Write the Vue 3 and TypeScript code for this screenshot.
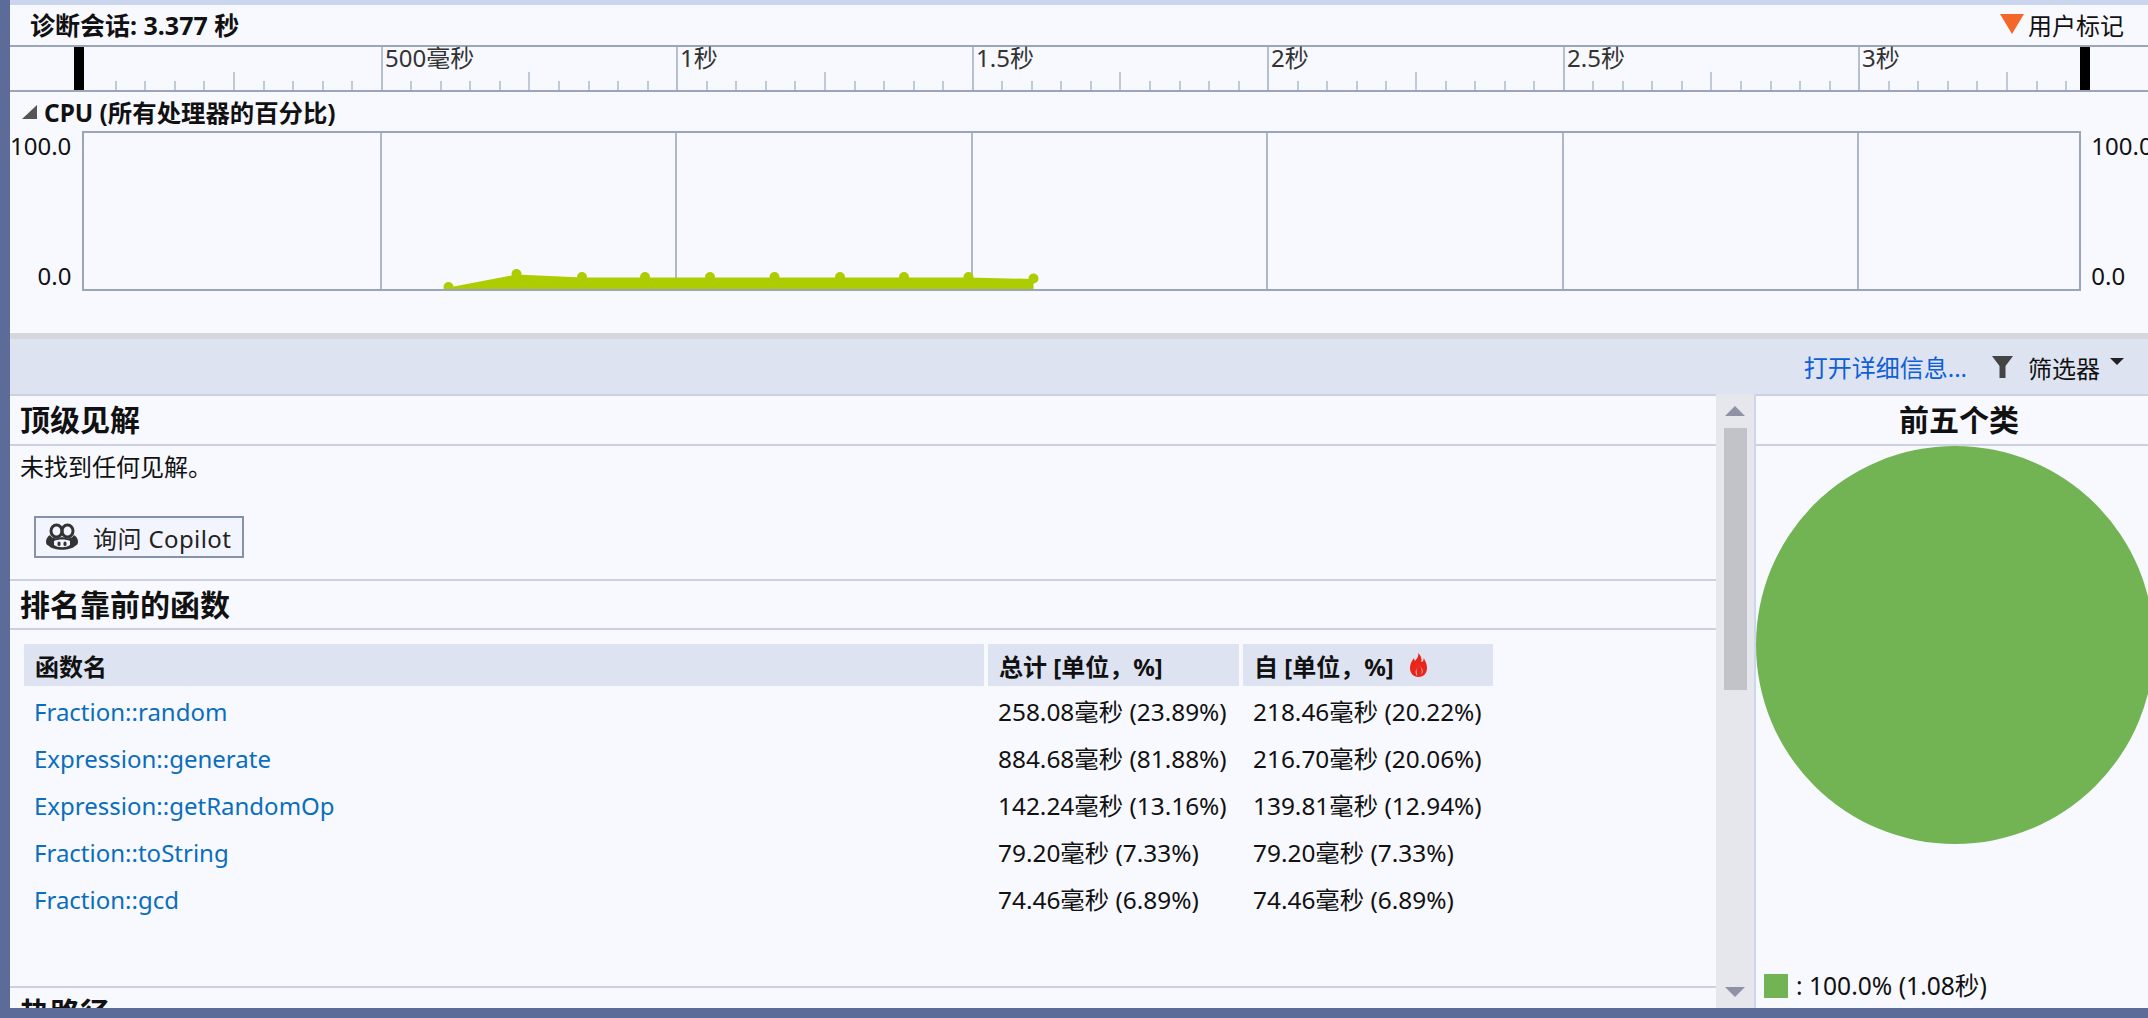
<script setup lang="ts">
interface FuncRow {
  name: string
  total: string
  self: string
}

const rows: FuncRow[] = [
  { name: 'Fraction::random', total: '258.08毫秒 (23.89%)', self: '218.46毫秒 (20.22%)' },
  { name: 'Expression::generate', total: '884.68毫秒 (81.88%)', self: '216.70毫秒 (20.06%)' },
  { name: 'Expression::getRandomOp', total: '142.24毫秒 (13.16%)', self: '139.81毫秒 (12.94%)' },
  { name: 'Fraction::toString', total: '79.20毫秒 (7.33%)', self: '79.20毫秒 (7.33%)' },
  { name: 'Fraction::gcd', total: '74.46毫秒 (6.89%)', self: '74.46毫秒 (6.89%)' },
]

// 时间轴: 每 500 毫秒 295.5px, 每格 1/10
const ORIGIN = 75.2
const STEP = 29.55
const ticks: { x: number; top: number; major: boolean }[] = []
for (let i = 1; i * STEP + ORIGIN < 2068; i++) {
  const major = i % 10 === 0
  const top = major ? 0 : i % 5 === 0 ? 25 : 34
  ticks.push({ x: i * STEP + ORIGIN, top, major })
}

const labels = [
  { text: '500毫秒', i: 10 },
  { text: '1秒', i: 20 },
  { text: '1.5秒', i: 30 },
  { text: '2秒', i: 40 },
  { text: '2.5秒', i: 50 },
  { text: '3秒', i: 60 },
].map((l) => ({ text: l.text, left: Math.round(l.i * STEP + ORIGIN) + 4 }))

// 图表内部坐标 = 页面坐标 - (83, 131)
const gridX = [10, 20, 30, 40, 50, 60].map((i) => i * STEP + ORIGIN - 73)
const dots: [number, number][] = [
  [366.5, 156],
  [434.5, 143],
  [500, 146],
  [563, 146],
  [628, 146],
  [692.5, 146],
  [758, 146],
  [822, 146],
  [886.5, 146],
  [951.5, 147.5],
]
const areaPoints =
  '361,158 ' + dots.map((d) => `${d[0]},${d[1] + 0.5}`).join(' ') + ' 951.5,158'
</script>

<template>
  <div class="window">
    <div class="top-band"></div>

    <header class="session">
      <span class="session-title">诊断会话: 3.377 秒</span>
      <span class="user-mark"><i class="mark-arrow"></i>用户标记</span>
    </header>

    <div class="ruler">
      <svg class="ruler-svg" width="2138" height="43">
        <rect
          v-for="t in ticks"
          :key="t.x"
          :x="Math.round(t.x)"
          :y="t.top"
          width="2"
          :height="43 - t.top"
          :fill="t.major ? '#b4bfd0' : '#c0c9d8'"
        />
        <rect x="64" y="0" width="10" height="43" fill="#000" />
        <rect x="2070" y="0" width="10" height="43" fill="#000" />
      </svg>
      <span v-for="l in labels" :key="l.text" class="ruler-label" :style="{ left: l.left + 'px' }">{{ l.text }}</span>
    </div>

    <section class="cpu">
      <h2 class="cpu-title"><i class="cpu-toggle"></i>CPU (所有处理器的百分比)</h2>
      <div class="cpu-row">
        <div class="axis axis-left">
          <span>100.0</span>
          <span>0.0</span>
        </div>
        <svg class="chart" width="1999" height="160">
          <rect
            v-for="x in gridX"
            :key="x"
            :x="Math.round(x)"
            y="0"
            width="2"
            height="160"
            fill="#adb8c9"
          />
          <polygon :points="areaPoints" fill="#aecd00" />
          <circle v-for="d in dots" :key="d[0]" :cx="d[0]" :cy="d[1]" r="5" fill="#aecd00" />
          <rect x="1" y="1" width="1997" height="158" fill="none" stroke="#9aa6b8" stroke-width="2" />
        </svg>
        <div class="axis axis-right">
          <span>100.0</span>
          <span>0.0</span>
        </div>
      </div>
    </section>

    <div class="split-bar"></div>

    <div class="toolbar">
      <a class="details-link">打开详细信息...</a>
      <svg class="filter-icon" width="21" height="22" viewBox="0 0 21 22">
        <path d="M0 0h21l-7.500 10v12h-6V10z" fill="#444" />
      </svg>
      <span class="filter-label">筛选器</span>
      <i class="filter-caret"></i>
    </div>

    <main class="main">
      <div class="content">
        <h2 class="section-title first">顶级见解</h2>
        <div class="insights">
          <p class="no-insights">未找到任何见解。</p>
          <button class="copilot-btn">
            <svg class="copilot-icon" width="32" height="28" viewBox="0 0 32 28">
              <ellipse cx="10.500" cy="8" rx="5.500" ry="6" fill="none" stroke="#333" stroke-width="3" />
              <ellipse cx="21.500" cy="8" rx="5.500" ry="6" fill="none" stroke="#333" stroke-width="3" />
              <path
                d="M4 12C1 14 0 16 0 19C0 21 1 22 3 23C8 28 24 28 29 23C31 22 32 21 32 19C32 16 31 14 28 12C26 16 22 16 16 14C10 16 6 16 4 12Z"
                fill="#333"
              />
              <path d="M8 18C12 16 20 16 24 18V22C20 25 12 25 8 22Z" fill="#f3f5fe" />
              <rect x="11.500" y="18.500" width="3" height="4.500" rx="1.500" fill="#333" />
              <rect x="17.500" y="18.500" width="3" height="4.500" rx="1.500" fill="#333" />
            </svg>
            <span>询问 Copilot</span>
          </button>
        </div>

        <h2 class="section-title">排名靠前的函数</h2>
        <div class="func-table">
          <div class="th">函数名</div>
          <div class="th">总计 [单位，%]</div>
          <div class="th">
            <span>自 [单位，%]</span>
            <svg class="flame" width="17" height="24" viewBox="0 0 21 24" preserveAspectRatio="none">
              <path
                d="M10 0C11 4 8 6 6 8C5 6 5 5 5 5C2 8 0 11 0 15C0 20 4 24 10.500 24C17 24 21 20 21 15C21 10 18 7 17 5C17 7 16 9 14 9C15 5 13 2 10 0Z"
                fill="#e8261c"
              />
              <path d="M11 11C11 14 7 15 7 19C7 21 8 22 9 23L8 16C9 15 10 14 11 11ZM12 13C14 15 15 17 14.500 20L13 22C15 21 16 19 15.500 17C15 15 13 14 12 13Z" fill="#f6b9ae" />
            </svg>
          </div>
          <template v-for="r in rows" :key="r.name">
            <a class="cell func-link">{{ r.name }}</a>
            <div class="cell num">{{ r.total }}</div>
            <div class="cell num">{{ r.self }}</div>
          </template>
        </div>

        <h2 class="section-title last">热路径</h2>
      </div>

      <div class="scrollbar">
        <i class="arrow-up"></i>
        <div class="thumb"></div>
        <i class="arrow-down"></i>
      </div>

      <aside class="side">
        <h2 class="side-title">前五个类</h2>
        <div class="pie"></div>
        <div class="legend">
          <i class="legend-swatch"></i>
          <span>: 100.0% (1.08秒)</span>
        </div>
      </aside>
    </main>
  </div>
</template>

<style scoped>
.window {
  background: #5d6b99;
  box-sizing: border-box;
  color: #111;
  display: flex;
  flex-direction: column;
  font-family: "Noto Sans", "Noto Sans CJK SC", sans-serif;
  font-size: 24px;
  height: 1018px;
  overflow: hidden;
  padding: 0 0 10px 10px;
  width: 2148px;
}

.top-band {
  background: #cad5ee;
  flex: none;
  height: 5px;
}

.session {
  align-items: center;
  background: #f8f9ff;
  border-bottom: 2px solid #9aa6b8;
  box-sizing: border-box;
  display: flex;
  flex: none;
  height: 42px;
  justify-content: space-between;
  padding: 0 24px 2px 20px;
}

.session-title {
  font-size: 25px;
  font-weight: 700;
}

.user-mark {
  align-items: center;
  display: flex;
  gap: 4px;
}

.mark-arrow {
  border-left: 12px solid transparent;
  border-right: 12px solid transparent;
  border-top: 20px solid #f4672a;
}

.ruler {
  background: #f8f9ff;
  border-bottom: 2px solid #9aa6b8;
  flex: none;
  height: 43px;
  position: relative;
}

.ruler-svg {
  display: block;
}

.ruler-label {
  color: #333;
  line-height: 24px;
  position: absolute;
  top: -1px;
}

.cpu {
  background: #f8f9ff;
  flex: none;
  height: 241px;
}

.cpu-title {
  align-items: center;
  box-sizing: border-box;
  display: flex;
  font-size: 24.4px;
  font-weight: 700;
  height: 39px;
  margin: 0;
  padding: 0 0 0 12px;
}

.cpu-toggle {
  border-bottom: 14px solid #555;
  border-left: 15px solid transparent;
  margin-right: 7px;
}

.cpu-row {
  display: flex;
}

.axis {
  display: flex;
  flex-direction: column;
  height: 160px;
  justify-content: space-between;
  line-height: 30px;
}

.axis-left {
  padding-right: 11px;
  text-align: right;
  width: 62px;
}

.axis-right {
  padding-left: 10px;
}

.chart {
  display: block;
  flex: none;
}

.split-bar {
  background: #d6d7dc;
  flex: none;
  height: 6px;
}

.toolbar {
  align-items: center;
  background: #dee3f1;
  display: flex;
  flex: none;
  height: 55px;
  justify-content: flex-end;
  padding-right: 24px;
}

.details-link {
  color: #0e5fd8;
  margin-right: 25px;
}

.filter-label {
  margin: 2px 10px 0 15px;
}

.filter-caret {
  border-left: 7px solid transparent;
  border-right: 7px solid transparent;
  border-top: 7px solid #222;
  margin-top: -10px;
}

.main {
  background: #f8f9ff;
  display: flex;
  flex: 1;
  min-height: 0;
}

.content {
  border-top: 2px solid #ccd0e0;
  flex: none;
  overflow: hidden;
  width: 1706px;
}

.section-title {
  border-bottom: 2px solid #ccd0e0;
  font-size: 30px;
  font-weight: 700;
  height: 47px;
  line-height: 47px;
  margin: 0;
  padding-left: 10px;
}

.section-title.first {
  height: 48px;
}

.insights {
  border-bottom: 2px solid #ccd0e0;
  height: 133px;
}

.no-insights {
  line-height: 32px;
  margin: 0;
  padding: 5px 0 0 10px;
}

.copilot-btn {
  align-items: center;
  background: #f3f5fe;
  border: 2px solid #8592aa;
  box-sizing: border-box;
  color: #222;
  display: flex;
  font: inherit;
  gap: 15px;
  height: 42px;
  letter-spacing: 0.4px;
  margin: 33px 0 0 24px;
  padding: 0 10px;
  white-space: nowrap;
  width: 210px;
}

.copilot-icon {
  flex: none;
}

.func-table {
  column-gap: 4px;
  display: grid;
  grid-auto-rows: 47px;
  grid-template-columns: 960px 251px 250px;
  grid-template-rows: 42px;
  height: 342px;
  margin: 14px 0 0 14px;
}

.th {
  align-items: center;
  background: #dee3f1;
  display: flex;
  font-weight: 700;
  padding-left: 11px;
}

.flame {
  margin-left: 16px;
}

.cell {
  align-items: center;
  display: flex;
  padding-left: 10px;
  transform: translateY(2px);
  white-space: nowrap;
}

.num {
  font-size: 24.4px;
  padding-left: 10px;
  transform: translateY(1px);
}

.func-link {
  color: #0a6ebd;
}

.section-title.last {
  border-bottom: none;
  border-top: 2px solid #ccd0e0;
  line-height: 50px;
}

.scrollbar {
  align-items: center;
  background: #e6e7ec;
  box-sizing: border-box;
  display: flex;
  flex: none;
  flex-direction: column;
  padding: 12px 0 11px;
  width: 38px;
}

.arrow-up {
  border-bottom: 10px solid #8f92a6;
  border-left: 10px solid transparent;
  border-right: 10px solid transparent;
}

.thumb {
  background: #c2c3c9;
  height: 262px;
  margin-top: 12px;
  width: 23px;
}

.arrow-down {
  border-left: 10px solid transparent;
  border-right: 10px solid transparent;
  border-top: 10px solid #8f92a6;
  margin-top: auto;
}

.side {
  border-left: 2px solid #ccd7ee;
  display: flex;
  flex: 1;
  flex-direction: column;
  min-width: 0;
  overflow: hidden;
}

.side-title {
  border-bottom: 2px solid #ccd0e0;
  border-top: 2px solid #ccd0e0;
  flex: none;
  font-size: 30px;
  font-weight: 700;
  height: 48px;
  line-height: 48px;
  margin: 0;
  padding-left: 14px;
  text-align: center;
}

.pie {
  background: #72b354;
  border-radius: 50%;
  flex: none;
  height: 398px;
  width: 398px;
}

.legend {
  align-items: center;
  display: flex;
  font-size: 24.6px;
  gap: 8px;
  line-height: 24px;
  margin-top: auto;
  padding: 0 0 10px 8px;
}

.legend-swatch {
  background: #72b354;
  flex: none;
  height: 24px;
  width: 24px;
}
</style>
